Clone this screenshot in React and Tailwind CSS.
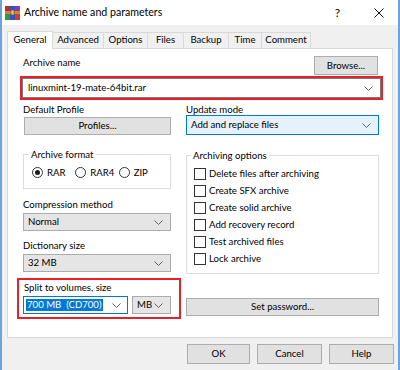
import React from "react";

const Chevron = () => (
  <svg width="9" height="5" viewBox="0 0 9 5" className="shrink-0">
    <polyline points="0.5,0.5 4.5,4.5 8.5,0.5" fill="none" stroke="#606060" strokeWidth="1" />
  </svg>
);

const WinRarIcon = () => (
  <svg width="15" height="14" viewBox="0 0 15 14" className="shrink-0">
    <rect x="0" y="0" width="5" height="7" fill="#c8262b" />
    <rect x="0" y="7" width="5" height="7" fill="#2e9b3f" />
    <rect x="5" y="0" width="5" height="14" fill="#3a4fc4" />
    <rect x="10" y="0" width="5" height="7" fill="#8b3aa6" />
    <rect x="10" y="7" width="5" height="7" fill="#d03b3b" />
    <rect x="0" y="5" width="15" height="3" fill="#c98a3a" />
    <rect x="6" y="4" width="3" height="5" fill="#e8c36a" stroke="#7a4a1a" strokeWidth="0.6" />
  </svg>
);

const Btn = ({ children, className = "" }) => (
  <div
    className={`flex items-center justify-center bg-[#e1e1e1] border border-[#adadad] leading-none ${className}`}
  >
    {children}
  </div>
);

const Select = ({ children, className = "" }) => (
  <div
    className={`flex items-center justify-between bg-[#e5e5e5] border border-[#acacac] pl-[4px] pr-[7px] ${className}`}
  >
    <span className="leading-none">{children}</span>
    <Chevron />
  </div>
);

const Radio = ({ checked, label }) => (
  <div className="flex items-center gap-[4px] w-[47px]">
    <div className="w-[11px] h-[11px] rounded-full border border-[#333] bg-white flex items-center justify-center">
      {checked && <div className="w-[5px] h-[5px] rounded-full bg-[#1a1a1a]" />}
    </div>
    <span className="leading-none">{label}</span>
  </div>
);

const Check = ({ label }) => (
  <div className="flex items-center h-[17px] gap-[3px]">
    <div className="w-[12px] h-[12px] border border-[#333] bg-white" />
    <span className="leading-none">{label}</span>
  </div>
);

export default function App() {
  const tabs = [
    ["Advanced", "w-[51px]"],
    ["Options", "w-[44px]"],
    ["Files", "w-[36px]"],
    ["Backup", "w-[45px]"],
    ["Time", "w-[33px]"],
    ["Comment", "w-[49px]"],
  ];
  return (
    <div className="w-[400px] h-[370px] bg-[#f0f0f0] border-x-2 border-[#6aa5e0] flex flex-col font-[Lato,sans-serif] text-[9.6px] text-black overflow-hidden">
      {/* title bar */}
      <div className="h-[25px] bg-white flex items-center pl-[3px] shrink-0">
        <WinRarIcon />
        <span className="ml-[4px] text-[10.6px] leading-none">Archive name and parameters</span>
        <span className="ml-auto text-[12px] leading-none mr-[34px]">?</span>
        <svg width="10" height="10" viewBox="0 0 10 10" className="mr-[14px]">
          <path d="M0.5 0.5 L9.5 9.5 M9.5 0.5 L0.5 9.5" stroke="#111" strokeWidth="1" />
        </svg>
      </div>

      {/* tabs */}
      <div className="flex items-start h-[17px] mt-[6px] ml-[5px] shrink-0">
        <div className="relative z-10 h-[18px] w-[46px] bg-white border border-[#d9d9d9] border-b-0 flex items-center justify-center pb-[1px]">
          General
        </div>
        {tabs.map(([t, w]) => (
          <div
            key={t}
            className={`h-[16px] mt-[1px] ${w} border border-[#d9d9d9] border-b-0 border-l-0 bg-[#f0f0f0] flex items-center justify-center`}
          >
            {t}
          </div>
        ))}
      </div>

      {/* panel */}
      <div className="ml-[5px] w-[386px] h-[290px] bg-white border border-[#d9d9d9] shrink-0 flex flex-col">
        {/* row 1 */}
        <div className="flex items-start justify-between mt-[7px] h-[19px] ml-[15px] mr-[14px]">
          <span className="leading-[13px]">Archive name</span>
          <Btn className="w-[64px] h-[19px]">Browse...</Btn>
        </div>
        <div className="mt-[1px] ml-[12px] w-[363px] h-[24px] border-2 border-[#e8202a]">
          <div className="h-[20px] border border-[#7a7a7a] bg-white flex items-center justify-between pl-[5px] pr-[7px]">
            <span className="leading-none">linuxmint-19-mate-64bit.rar</span>
            <Chevron />
          </div>
        </div>

        <div className="flex ml-[15px]">
          {/* left column */}
          <div className="w-[148px] flex flex-col">
            <span className="mt-[3px] leading-[13px]">Default Profile</span>
            <Btn className="mt-[1px] ml-[1px] w-[147px] h-[18px]">Profiles...</Btn>
            <fieldset className="mt-[13px] h-[41px] border border-[#dcdcdc] px-[8px] m-0 min-w-0">
              <legend className="-ml-[3px] px-[2px] leading-[13px]">Archive format</legend>
              <div className="flex items-center mt-[6px]">
                <Radio checked label="RAR" />
                <Radio label="RAR4" />
                <Radio label="ZIP" />
              </div>
            </fieldset>
            <span className="mt-[9px] leading-[13px]">Compression method</span>
            <Select className="mt-[2px] h-[18px]">Normal</Select>
            <span className="mt-[8px] leading-[13px]">Dictionary size</span>
            <Select className="mt-[2px] h-[18px]">32 MB</Select>
            <div className="mt-[6px] -ml-[6px] w-[164px] h-[41px] border-2 border-[#e8202a] pl-[4px] flex flex-col">
              <span className="mt-[1px] leading-[13px] ml-[1px]">Split to volumes, size</span>
              <div className="flex mt-[2px] gap-[4px]">
                <div className="w-[105px] h-[18px] border border-[#0078d7] bg-white flex items-center justify-between pl-[2px] pr-[6px]">
                  <span className="bg-[#0078d7] text-white leading-[12px] whitespace-pre px-[1px]">700 MB  (CD700)</span>
                  <Chevron />
                </div>
                <Select className="w-[39px] h-[18px] pl-[3px] pr-[5px]">MB</Select>
              </div>
            </div>
          </div>

          {/* right column */}
          <div className="ml-[15px] w-[193px] flex flex-col">
            <span className="mt-[3px] leading-[13px]">Update mode</span>
            <div className="mt-[-1px] h-[20px] border border-[#0078d7] bg-[#e5f1fb] flex items-center justify-between pl-[4px] pr-[7px]">
              <span className="leading-none">Add and replace files</span>
              <Chevron />
            </div>
            <fieldset className="mt-[14px] h-[125px] border border-[#dcdcdc] pl-[7px] pr-[8px] m-0 min-w-0">
              <legend className="px-[2px] leading-[13px] -ml-[3px]">Archiving options</legend>
              <div className="flex flex-col mt-[3px]">
                <Check label="Delete files after archiving" />
                <Check label="Create SFX archive" />
                <Check label="Create solid archive" />
                <Check label="Add recovery record" />
                <Check label="Test archived files" />
                <Check label="Lock archive" />
              </div>
            </fieldset>
            <Btn className="mt-[24px] h-[18px]">Set password...</Btn>
          </div>
        </div>
      </div>

      {/* buttons */}
      <div className="flex justify-end gap-[7px] mt-[6px] pr-[4px] shrink-0">
        <Btn className="w-[63px] h-[20px] border-[#0078d7]">OK</Btn>
        <Btn className="w-[65px] h-[20px]">Cancel</Btn>
        <Btn className="w-[65px] h-[20px]">Help</Btn>
      </div>
    </div>
  );
}
